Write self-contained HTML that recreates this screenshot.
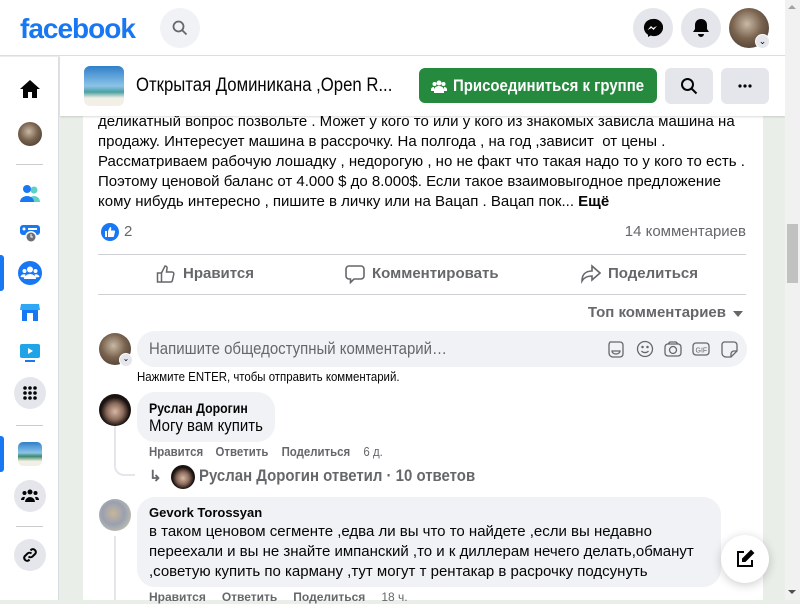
<!DOCTYPE html>
<html><head><meta charset="utf-8"><style>
*{box-sizing:border-box;margin:0;padding:0}
body{width:800px;height:600px;overflow:hidden;background:#e9eee9;font-family:"Liberation Sans",sans-serif;color:#050505;position:relative}
.a{position:absolute}
.n{transform:scaleX(.88);transform-origin:left center;white-space:nowrap}
.circ{border-radius:50%}
.grey{color:#65676b}
.ava{border-radius:50%;background:radial-gradient(circle at 45% 40%,#c9b9a5 0,#7a6450 45%,#3a2d25 100%)}
</style></head><body>
<div class="a" style="left:83px;top:56px;width:680px;height:544px;background:#fff"></div>
<div class="a" style="left:98px;top:112px;width:660px;font-size:15px;line-height:20px">деликатный вопрос позвольте . Может у кого то или у кого из знакомых зависла машина на продажу. Интересует машина в рассрочку. На полгода , на год ,зависит &nbsp;от цены . Рассматриваем рабочую лошадку , недорогую , но не факт что такая надо то у кого то есть . Поэтому ценовой баланс от 4.000 $ до 8.000$. Если такое взаимовыгодное предложение кому нибудь интересно , пишите в личку или на Вацап . Вацап пок... <b>Ещё</b></div>
<div class="a" style="left:60px;top:56px;width:725px;height:60px;background:#fff;box-shadow:0 1px 2px rgba(0,0,0,.15)"></div>
<div class="a" style="left:84px;top:66px;width:40px;height:40px;border-radius:6px;background:linear-gradient(180deg,#2f7fc9 0,#8cc4e8 50%,#4aa0a0 65%,#f2efe6 80%)"></div>
<div class="a n" style="left:136px;top:75px;font-size:19px">Открытая Доминикана ,Open R...</div>
<div class="a" style="left:419px;top:68px;width:238px;height:35px;background:#258a3e;border-radius:6px"></div>
<div class="a n" style="left:453px;top:76px;color:#fff;font-weight:bold;font-size:17px">Присоединиться к группе</div>
<svg class="a" style="left:431px;top:78px" width="16" height="16" viewBox="0 0 16 16" fill="#fff"><circle cx="8" cy="5" r="2.5"/><circle cx="3.5" cy="6" r="2"/><circle cx="12.5" cy="6" r="2"/><path d="M3 15v-3a5 4 0 0 1 10 0v3zM0 13v-2a3 3 0 0 1 3-2v4zM16 13v-2a3 3 0 0 0-3-2v4z"/></svg>
<div class="a" style="left:665px;top:68px;width:48px;height:36px;background:#e4e6eb;border-radius:6px"></div>
<svg class="a" style="left:680px;top:77px" width="18" height="18" viewBox="0 0 18 18" fill="none" stroke="#050505" stroke-width="2"><circle cx="7.5" cy="7.5" r="5.5"/><path d="M11.5 11.5l5 5"/></svg>
<div class="a" style="left:721px;top:68px;width:48px;height:36px;background:#e4e6eb;border-radius:6px"></div>
<svg class="a" style="left:737px;top:84px" width="16" height="4" viewBox="0 0 16 4" fill="#050505"><circle cx="3" cy="2" r="1.6"/><circle cx="8" cy="2" r="1.6"/><circle cx="13" cy="2" r="1.6"/></svg>
<div class="a" style="left:0;top:0;width:785px;height:56px;background:#fff;border-bottom:1px solid #ddd"></div>
<div class="a" style="left:20px;top:13px;font-size:28px;font-weight:bold;color:#1877f2;letter-spacing:-1px">facebook</div>
<div class="a circ" style="left:160px;top:8px;width:40px;height:40px;background:#f0f2f5"></div>
<svg class="a" style="left:172px;top:20px" width="16" height="16" viewBox="0 0 16 16" fill="none" stroke="#65676b" stroke-width="1.8"><circle cx="6.5" cy="6.5" r="5"/><path d="M10 10l4.5 4.5"/></svg>
<div class="a circ" style="left:633px;top:8px;width:40px;height:40px;background:#e4e6eb"></div>
<svg class="a" style="left:643px;top:18px" width="20" height="20" viewBox="0 0 20 20"><path d="M10 1a9 8.6 0 0 0-5 15.8V19l2.7-1.5A9 8.6 0 1 0 10 1z" fill="#050505"/><path d="M4.5 12l3.5-4 2 2 4-2-3.5 4-2-2z" fill="#fff"/></svg>
<div class="a circ" style="left:681px;top:8px;width:40px;height:40px;background:#e4e6eb"></div>
<svg class="a" style="left:692px;top:18px" width="18" height="20" viewBox="0 0 18 20" fill="#050505"><path d="M9 1c-4 0-6 3-6 6v4l-2 3h16l-2-3V7c0-3-2-6-6-6zM6 16a3 3 0 0 0 6 0z"/></svg>
<div class="a ava" style="left:729px;top:8px;width:40px;height:40px"></div>
<div class="a circ" style="left:755px;top:34px;width:15px;height:15px;background:#e4e6eb;border:1px solid #fff;font-size:9px;text-align:center;line-height:12px">⌄</div>
<div class="a" style="left:0;top:57px;width:59px;height:543px;background:#fff;border-right:1px solid #dadde1"></div>
<svg class="a" style="left:20px;top:79px" width="20" height="20" viewBox="0 0 20 20" fill="#050505"><path d="M10 1L0 10h3v9h5v-6h4v6h5v-9h3z"/></svg>
<div class="a ava" style="left:18px;top:122px;width:24px;height:24px"></div>
<div class="a" style="left:16px;top:164px;width:27px;height:1px;background:#ccc"></div>
<svg class="a" style="left:19px;top:182px" width="22" height="22" viewBox="0 0 22 22"><circle cx="15" cy="8" r="3.5" fill="#5fd0c5"/><path d="M9 20a6 6 0 0 1 12 0z" fill="#5fd0c5"/><circle cx="8" cy="7" r="4" fill="#1877f2"/><path d="M1 20a7 6 0 0 1 14 0z" fill="#1877f2"/></svg>
<svg class="a" style="left:19px;top:222px" width="22" height="22" viewBox="0 0 22 22"><rect x="1" y="3" width="20" height="10" rx="3" fill="#1877f2"/><circle cx="5" cy="7" r="1.5" fill="#fff"/><rect x="9" y="6" width="9" height="2" fill="#fff"/><circle cx="12" cy="15" r="6" fill="#fff"/><circle cx="12" cy="15" r="4.5" fill="#6a7079"/><path d="M12 12v3h2" stroke="#fff" fill="none"/></svg>
<div class="a" style="left:0;top:255px;width:4px;height:36px;background:#1877f2;border-radius:0 3px 3px 0"></div>
<svg class="a" style="left:18px;top:261px" width="24" height="24" viewBox="0 0 24 24"><circle cx="12" cy="12" r="12" fill="#1877f2"/><circle cx="12" cy="8.5" r="3" fill="#fff"/><circle cx="6.5" cy="10" r="2" fill="#fff"/><circle cx="17.5" cy="10" r="2" fill="#fff"/><path d="M6 18a6 5 0 0 1 12 0zM2.5 16a3.5 3 0 0 1 5-2.5l-1 3zM21.5 16a3.5 3 0 0 0-5-2.5l1 3z" fill="#fff"/></svg>
<svg class="a" style="left:20px;top:302px" width="20" height="20" viewBox="0 0 20 20"><path d="M1 2h18l1 6H0z" fill="#2ea8f5"/><rect x="2" y="8" width="16" height="11" fill="#1877f2"/><rect x="7" y="11" width="6" height="8" fill="#fff"/></svg>
<svg class="a" style="left:19px;top:341px" width="22" height="22" viewBox="0 0 22 22"><rect x="1" y="3" width="20" height="14" rx="2" fill="#1fa4e8"/><path d="M9 7v6l5-3z" fill="#fff"/><rect x="6" y="19" width="10" height="2" fill="#1877f2"/></svg>
<div class="a circ" style="left:14px;top:377px;width:32px;height:32px;background:#e4e6eb"></div>
<svg class="a" style="left:22px;top:385px" width="16" height="16" viewBox="0 0 16 16" fill="#050505"><circle cx="3" cy="3" r="1.8"/><circle cx="8" cy="3" r="1.8"/><circle cx="13" cy="3" r="1.8"/><circle cx="3" cy="8" r="1.8"/><circle cx="8" cy="8" r="1.8"/><circle cx="13" cy="8" r="1.8"/><circle cx="3" cy="13" r="1.8"/><circle cx="8" cy="13" r="1.8"/><circle cx="13" cy="13" r="1.8"/></svg>
<div class="a" style="left:16px;top:425px;width:27px;height:1px;background:#ccc"></div>
<div class="a" style="left:0;top:436px;width:4px;height:36px;background:#1877f2;border-radius:0 3px 3px 0"></div>
<div class="a" style="left:18px;top:442px;width:24px;height:24px;border-radius:5px;background:linear-gradient(180deg,#2f7fc9 0,#8cc4e8 45%,#3d8a6a 60%,#f2efe6 80%)"></div>
<div class="a circ" style="left:14px;top:480px;width:32px;height:32px;background:#e4e6eb"></div>
<svg class="a" style="left:21px;top:488px" width="18" height="16" viewBox="0 0 18 16" fill="#050505"><circle cx="9" cy="4" r="2.5"/><circle cx="3.5" cy="5" r="2"/><circle cx="14.5" cy="5" r="2"/><path d="M4 14a5 5 0 0 1 10 0zM0 12a3 3 0 0 1 4-3l-1 3zM18 12a3 3 0 0 0-4-3l1 3z"/></svg>
<div class="a" style="left:16px;top:526px;width:27px;height:1px;background:#ccc"></div>
<div class="a circ" style="left:14px;top:539px;width:32px;height:32px;background:#e4e6eb"></div>
<svg class="a" style="left:21px;top:546px" width="18" height="18" viewBox="0 0 18 18" fill="none" stroke="#050505" stroke-width="2"><path d="M7.5 10.5a3 3 0 0 0 4 0l3-3a3 3 0 0 0-4-4l-1 1"/><path d="M10.5 7.5a3 3 0 0 0-4 0l-3 3a3 3 0 0 0 4 4l1-1"/></svg>
<svg class="a" style="left:101px;top:223px" width="18" height="18" viewBox="0 0 18 18"><circle cx="9" cy="9" r="9" fill="#1877f2"/><path d="M4 8h2v6H4zM7 8l2-4c1 0 1.5.7 1.2 2L10 7.5h3a1 1 0 0 1 1 1.2l-1 4.3a1 1 0 0 1-1 1H7z" fill="#fff"/></svg>
<div class="a grey" style="left:124px;top:223px;font-size:15px">2</div>
<div class="a grey" style="left:560px;top:223px;width:186px;text-align:right;font-size:15px">14 комментариев</div>
<div class="a" style="left:98px;top:254px;width:648px;height:1px;background:#ced0d4"></div>
<div class="a" style="left:98px;top:294px;width:648px;height:1px;background:#ced0d4"></div>
<svg class="a" style="left:156px;top:264px" width="20" height="20" viewBox="0 0 20 20" fill="none" stroke="#65676b" stroke-width="1.5"><rect x="1.5" y="9" width="4" height="9"/><path d="M5.5 9l3.5-7c1.5 0 2.3 1 2 2.5L10.5 8H16a1.8 1.8 0 0 1 1.8 2.2l-1.4 6.2A2 2 0 0 1 14.5 18H5.5"/></svg>
<div class="a grey" style="left:183px;top:265px;font-size:15px;font-weight:bold">Нравится</div>
<svg class="a" style="left:345px;top:264px" width="20" height="20" viewBox="0 0 20 20" fill="none" stroke="#65676b" stroke-width="1.6"><path d="M4 2h12a3 3 0 0 1 3 3v7a3 3 0 0 1-3 3H9l-3.5 3.5V15H4a3 3 0 0 1-3-3V5a3 3 0 0 1 3-3z"/></svg>
<div class="a grey" style="left:372px;top:265px;font-size:15px;font-weight:bold">Комментировать</div>
<svg class="a" style="left:581px;top:264px" width="20" height="20" viewBox="0 0 20 20" fill="none" stroke="#65676b" stroke-width="1.6"><path d="M11 2l8 7-8 7v-4c-5 0-8 1.5-10 5 0-6 3-10 10-10z"/></svg>
<div class="a grey" style="left:608px;top:265px;font-size:15px;font-weight:bold">Поделиться</div>
<div class="a grey" style="left:560px;top:304px;width:166px;text-align:right;font-size:15px;font-weight:bold">Топ комментариев</div>
<div class="a" style="left:733px;top:311px;border:5px solid transparent;border-top:6px solid #65676b;border-bottom:0"></div>
<div class="a ava" style="left:99px;top:333px;width:32px;height:32px"></div>
<div class="a circ" style="left:119px;top:353px;width:14px;height:14px;background:#e4e6eb;border:1px solid #fff;font-size:8px;text-align:center;line-height:10px">⌄</div>
<div class="a" style="left:137px;top:331px;width:610px;height:36px;background:#f0f2f5;border-radius:18px"></div>
<div class="a grey n" style="left:149px;top:339px;font-size:17px">Напишите общедоступный комментарий…</div>
<svg class="a" style="left:607px;top:340px" width="132" height="18" viewBox="0 0 132 18" fill="none" stroke="#65676b" stroke-width="1.3"><path d="M3 2h10a3 3 0 0 1 3 3v9a3 3 0 0 1-3 3H6a4 4 0 0 1-4-4V4z"/><path d="M5 11h8a4 3 0 0 1-8 0z"/><circle cx="38" cy="9" r="7.5"/><circle cx="35.5" cy="7" r=".6"/><circle cx="40.5" cy="7" r=".6"/><path d="M34.5 11a4 3 0 0 0 7 0"/><rect x="58" y="4" width="16" height="12" rx="3"/><circle cx="66" cy="10" r="3.5"/><path d="M61 4l2-2h6l2 2"/><rect x="86" y="3" width="16" height="12" rx="3"/><text x="88.5" y="12.5" font-size="7" fill="#65676b" stroke="none" font-family="Liberation Sans">GIF</text><path d="M117 2h10a3 3 0 0 1 3 3v6l-6 6h-5a4 4 0 0 1-4-4V5a3 3 0 0 1 2-3z"/><path d="M124 17v-3a3 3 0 0 1 3-3h3"/></svg>
<div class="a n" style="left:137px;top:369px;font-size:13px">Нажмите ENTER, чтобы отправить комментарий.</div>
<div class="a circ" style="left:99px;top:394px;width:32px;height:32px;background:radial-gradient(circle at 50% 55%,#d9b8a5 0,#8a6a5a 35%,#1a1210 60%)"></div>
<div class="a" style="left:114px;top:426px;width:21px;height:50px;border-left:2px solid #e4e6eb;border-bottom:2px solid #e4e6eb;border-bottom-left-radius:10px"></div>
<div class="a" style="left:137px;top:392px;width:138px;height:50px;background:#f0f2f5;border-radius:18px"></div>
<div class="a n" style="left:149px;top:400px;font-size:14px;font-weight:bold">Руслан Дорогин</div>
<div class="a n" style="left:149px;top:416px;font-size:17px">Могу вам купить</div>
<div class="a grey n" style="left:149px;top:444px;font-size:13px;font-weight:bold"><span>Нравится</span><span style="margin-left:14px">Ответить</span><span style="margin-left:15px">Поделиться</span><span style="margin-left:15px;font-weight:normal">6 д.</span></div>
<div class="a grey" style="left:149px;top:467px;font-size:15px;font-weight:bold">↳</div>
<div class="a circ" style="left:171px;top:465px;width:24px;height:24px;background:radial-gradient(circle at 50% 55%,#d9b8a5 0,#8a6a5a 35%,#1a1210 60%)"></div>
<div class="a grey n" style="left:199px;top:466px;font-size:17px;font-weight:bold">Руслан Дорогин ответил · 10 ответов</div>
<div class="a circ" style="left:99px;top:499px;width:32px;height:32px;background:radial-gradient(circle at 45% 45%,#c7b79a 0,#9aa0b0 45%,#d9d3b0 100%)"></div>
<div class="a" style="left:114px;top:536px;width:2px;height:64px;background:#e4e6eb"></div>
<div class="a" style="left:137px;top:497px;width:584px;height:90px;background:#f0f2f5;border-radius:18px"></div>
<div class="a" style="left:149px;top:505px;font-size:13px;font-weight:bold">Gevork Torossyan</div>
<div class="a" style="left:149px;top:522px;width:570px;font-size:15px;line-height:20px">в таком ценовом сегменте ,едва ли вы что то найдете ,если вы недавно переехали и вы не знайте импанский ,то и к диллерам нечего делать,обманут ,советую купить по карману ,тут могут т рентакар в расрочку подсунуть</div>
<div class="a grey" style="left:149px;top:590px;font-size:12px;font-weight:bold"><span>Нравится</span><span style="margin-left:16px">Ответить</span><span style="margin-left:16px">Поделиться</span><span style="margin-left:16px;font-weight:normal">18 ч.</span></div>
<div class="a circ" style="left:721px;top:535px;width:48px;height:48px;background:#fff;box-shadow:0 2px 10px rgba(0,0,0,.2)"></div>
<svg class="a" style="left:735px;top:549px" width="20" height="20" viewBox="0 0 20 20" fill="none" stroke="#050505" stroke-width="2"><path d="M9 3H3v14h14v-6"/><path d="M16 2l2 2-8 8H8v-2z" fill="#050505"/></svg>
<div class="a" style="left:785px;top:0;width:15px;height:600px;background:#f1f1f1"></div>
<div class="a" style="left:787px;top:224px;width:11px;height:59px;background:#c1c1c1"></div>
<div class="a" style="left:788px;top:5px;border:4px solid transparent;border-bottom:4px solid #a3a3a3;border-top:0"></div>
<div class="a" style="left:788px;top:590px;border:4px solid transparent;border-top:4px solid #505050;border-bottom:0"></div>
</body></html>
